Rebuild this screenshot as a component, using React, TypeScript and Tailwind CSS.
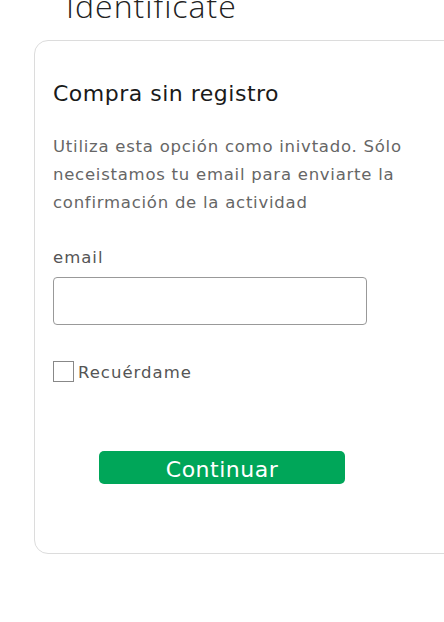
export default function App() {
  return (
    <div
      className="w-[444px] h-[622px] overflow-hidden bg-white"
      style={{ fontFamily: '"DejaVu Sans", "Open Sans", sans-serif' }}
    >
      <h1
        className="ml-[66px] -mt-[10px] text-[32px] leading-[32px] font-light tracking-[1px] text-[#222]"
        style={{ fontFamily: '"Open Sans", sans-serif' }}
      >
        Identificate
      </h1>

      <div className="ml-[34px] mt-[18px] w-[430px] rounded-[14px] border border-[#dcdcdc] pl-[18px] pt-[39px] pb-[69px]">
        <h2 className="text-[22px] leading-[28px] font-normal tracking-[0.5px] text-[#1a1a1a]">
          Compra sin registro
        </h2>
        <p className="mt-[25px] w-[370px] text-[16.5px] leading-[28px] tracking-[0.75px] text-[#666]">
          Utiliza esta opción como inivtado. Sólo neceistamos tu email para
          enviarte la confirmación de la actividad
        </p>

        <label className="mt-[29px] block text-[16.5px] leading-[24px] tracking-[1px] text-[#555]">
          email
        </label>
        <input
          type="email"
          className="mt-[7px] block h-[48px] w-[314px] rounded-[4px] border border-[#999] bg-white px-3 outline-none"
        />

        <div className="mt-[35px] flex h-[22px] items-center gap-[4px]">
          <span className="block h-[21px] w-[21px] border border-[#888] bg-white" />
          <span className="pt-[3px] text-[16.5px] leading-[22px] tracking-[1px] text-[#555]">
            Recuérdame
          </span>
        </div>

        <button className="ml-[46px] mt-[69px] flex h-[33px] w-[246px] items-center justify-center rounded-[5px] bg-[#00a659] pt-[5px] text-[22px] leading-[28px] tracking-[0.5px] text-white">
          Continuar
        </button>
      </div>
    </div>
  );
}
